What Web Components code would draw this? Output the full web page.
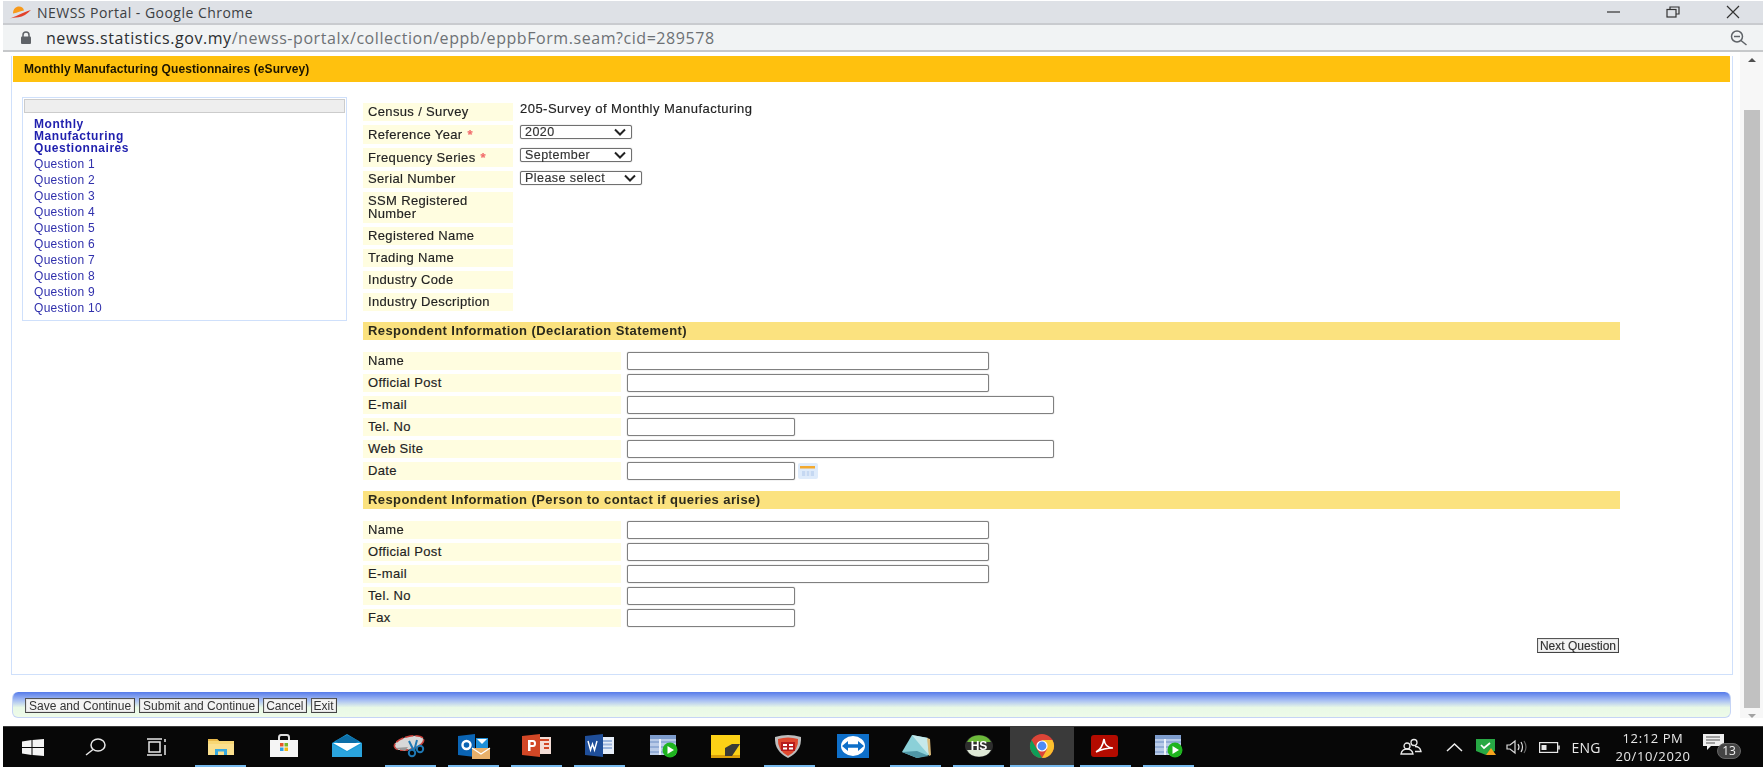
<!DOCTYPE html>
<html>
<head>
<meta charset="utf-8">
<title>NEWSS Portal</title>
<style>
  html, body { margin: 0; height: 100%; background: #fff; overflow: hidden; }
  body { font-family: "Liberation Sans", Arial, sans-serif; }
  .value { margin: -2px 0 0 1px; letter-spacing: .47px; }
</style>
</head>
<body>
<app-shell>
  <chrome-titlebar slot="top">NEWSS Portal - Google Chrome</chrome-titlebar>
  <chrome-address slot="top" host="newss.statistics.gov.my" path="/newss-portalx/collection/eppb/eppbForm.seam?cid=289578"></chrome-address>

  <survey-panel heading="Monthly Manufacturing Questionnaires (eSurvey)">
    <nav-menu slot="nav" title-text="Monthly Manufacturing Questionnaires" count="10"></nav-menu>

    <form-row label="Census / Survey" label-width="150" height="18" flush><span class="value">205-Survey of Monthly Manufacturing</span></form-row>
    <form-row label="Reference Year" required label-width="150" height="19"><pick-list width="112" value="2020"></pick-list></form-row>
    <form-row label="Frequency Series" required label-width="150" height="19"><pick-list width="112" value="September"></pick-list></form-row>
    <form-row label="Serial Number" label-width="150" height="17"><pick-list width="122" value="Please select"></pick-list></form-row>
    <form-row label="SSM Registered Number" label-width="150" height="31" wrap></form-row>
    <form-row label="Registered Name" label-width="150" height="18"></form-row>
    <form-row label="Trading Name" label-width="150" height="18"></form-row>
    <form-row label="Industry Code" label-width="150" height="18"></form-row>
    <form-row label="Industry Description" label-width="150" height="18"></form-row>

    <form-section>Respondent Information (Declaration Statement)</form-section>
    <form-row label="Name" label-width="258" height="18" first><text-field width="362"></text-field></form-row>
    <form-row label="Official Post" label-width="258" height="18"><text-field width="362"></text-field></form-row>
    <form-row label="E-mail" label-width="258" height="18"><text-field width="427"></text-field></form-row>
    <form-row label="Tel. No" label-width="258" height="18"><text-field width="168"></text-field></form-row>
    <form-row label="Web Site" label-width="258" height="18"><text-field width="427"></text-field></form-row>
    <form-row label="Date" label-width="258" height="18"><text-field width="168"></text-field><calendar-button></calendar-button></form-row>

    <form-section>Respondent Information (Person to contact if queries arise)</form-section>
    <form-row label="Name" label-width="258" height="18" first><text-field width="362"></text-field></form-row>
    <form-row label="Official Post" label-width="258" height="18"><text-field width="362"></text-field></form-row>
    <form-row label="E-mail" label-width="258" height="18"><text-field width="362"></text-field></form-row>
    <form-row label="Tel. No" label-width="258" height="18"><text-field width="168"></text-field></form-row>
    <form-row label="Fax" label-width="258" height="18"><text-field width="168"></text-field></form-row>

    <next-row><plain-button tight>Next Question</plain-button></next-row>
  </survey-panel>

  <footer-bar>
    <plain-button>Save and Continue</plain-button>
    <plain-button>Submit and Continue</plain-button>
    <plain-button tight>Cancel</plain-button>
    <plain-button tight>Exit</plain-button>
  </footer-bar>

  <task-bar slot="bottom"></task-bar>
</app-shell>

<script>
class AppShell extends HTMLElement {
  constructor() {
    super();
    this.attachShadow({ mode: "open" });
    this.shadowRoot.innerHTML = `
      <style>
        :host { display: flex; flex-direction: column; width: 1763px; height: 767px; box-sizing: border-box; padding: 1px 0 0 3px; filter: blur(.45px); }
        .mid { flex: 1; display: flex; min-height: 0; }
        .page { flex: 1; padding: 4px 7px 0 8px; min-width: 0; }
        .scroll { width: 23px; background: #f7f7f7; display: flex; flex-direction: column; align-items: center; box-sizing: border-box; padding-top: 6px; }
        .thumb { width: 16px; height: 599px; background: #c1c1c1; margin-top: 48px; }
        .up { width: 0; height: 0; border: 4px solid transparent; border-top: 0; border-bottom: 4px solid #505050; }
        .down { width: 0; height: 0; border: 4px solid transparent; border-bottom: 0; border-top: 4px solid #a3a3a3; margin-top: 6px; }
      </style>
      <slot name="top"></slot>
      <div class="mid">
        <div class="page"><slot></slot></div>
        <div class="scroll"><div class="up"></div><div class="thumb"></div><div class="down"></div></div>
      </div>
      <slot name="bottom"></slot>`;
  }
}
customElements.define("app-shell", AppShell);

class ChromeTitlebar extends HTMLElement {
  constructor() {
    super();
    this.attachShadow({ mode: "open" });
    this.shadowRoot.innerHTML = `
      <style>
        :host { display: flex; align-items: center; height: 22px; background: #dee1e6; border-bottom: 2px solid #c9cbcf; font: 14px "Open Sans", sans-serif; letter-spacing: .47px; color: #3c4043; }
        svg { display: block; }
        .logo { margin: 0 6px 0 6px; }
        .title { flex: 1; }
        .ctl { width: 60px; display: flex; justify-content: center; }
      </style>
      <svg class="logo" width="22" height="13" viewBox="0 0 22 13">
        <path d="M4 7.500C4 3 7 .5 10 .5c2.500 0 4.500 1.500 5 4-3 .6-6 2-11 3z" fill="#f79a1b"/>
        <path d="M0 12.500c6-1 13-6 22-8.500-4 4-8 7-12.500 7.300-3.500.3-6.500.8-9.500 1.200z" fill="#e2412a"/>
      </svg>
      <span class="title"><slot></slot></span>
      <span class="ctl"><svg width="16" height="12" viewBox="0 0 16 12"><path d="M2 6h13" stroke="#333" stroke-width="1.200"/></svg></span>
      <span class="ctl"><svg width="16" height="12" viewBox="0 0 16 12" fill="none" stroke="#333" stroke-width="1.200"><rect x="2" y="3.500" width="9" height="7.500"/><path d="M5 3.500V1h9v7h-3"/></svg></span>
      <span class="ctl"><svg width="16" height="14" viewBox="0 0 16 14"><path d="M2 1l12 12M14 1L2 13" stroke="#333" stroke-width="1.200"/></svg></span>`;
  }
}
customElements.define("chrome-titlebar", ChromeTitlebar);

class ChromeAddress extends HTMLElement {
  constructor() {
    super();
    this.attachShadow({ mode: "open" });
    this.shadowRoot.innerHTML = `
      <style>
        :host { display: flex; align-items: center; height: 25px; background: #f1f3f4; border-bottom: 2px solid #c6c8ca; font: 16px "Open Sans", sans-serif; letter-spacing: .56px; color: #6d7175; }
        svg { display: block; }
        b { font-weight: 400; color: #2b2e31; }
        .lock { margin: 0 14px 0 17px; }
        .url { flex: 1; }
        .zoom { margin-right: 15px; }
      </style>
      <svg class="lock" width="12" height="13" viewBox="0 0 12 13"><path d="M3 6V4a3 3 0 0 1 6 0v2" fill="none" stroke="#5f6368" stroke-width="1.500"/><rect x="1" y="5.500" width="10" height="7.500" rx="1" fill="#5f6368"/></svg>
      <span class="url"><b>${this.getAttribute("host")}</b>${this.getAttribute("path")}</span>
      <svg class="zoom" width="19" height="16" viewBox="0 0 19 16" fill="none" stroke="#5f6368" stroke-width="1.500"><circle cx="8" cy="6.500" r="5.500"/><path d="M5 6.500h6M12 10.500l5.500 4.500"/></svg>`;
  }
}
customElements.define("chrome-address", ChromeAddress);

class SurveyPanel extends HTMLElement {
  constructor() {
    super();
    this.attachShadow({ mode: "open" });
    this.shadowRoot.innerHTML = `
      <style>
        :host { display: block; height: 619px; box-sizing: border-box; border: 1px solid #cfe0fb; border-top-width: 0; padding-right: 2px; }
        .head { height: 26px; margin-left: 1px; background: #ffc10e; color: #1c1500; font-weight: 700; font-size: 12px; letter-spacing: .1px; line-height: 27px; padding-left: 11px; }
        .body { display: flex; padding: 15px 0 0 10px; }
        .form { width: 1257px; margin-left: 16px; padding-top: 6px; font-size: 13px; color: #222; -webkit-text-stroke: .15px currentColor; }
      </style>
      <div class="head">${this.getAttribute("heading")}</div>
      <div class="body">
        <slot name="nav"></slot>
        <div class="form"><slot></slot></div>
      </div>`;
  }
}
customElements.define("survey-panel", SurveyPanel);

class NavMenu extends HTMLElement {
  constructor() {
    super();
    this.attachShadow({ mode: "open" });
    let items = "";
    const n = parseInt(this.getAttribute("count") || 0);
    for (let i = 1; i <= n; i++) items += `<a>Question ${i}</a>`;
    this.shadowRoot.innerHTML = `
      <style>
        :host { display: block; width: 325px; height: 224px; box-sizing: border-box; border: 1px solid #cfe0fb; padding: 1px 1px 0; font-size: 12px; letter-spacing: .3px; color: #3030ac; }
        .top { height: 12px; background: #eee; border: 1px solid #ccc; }
        .list { padding: 5px 0 0 10px; }
        .main { font-weight: 700; width: 110px; line-height: 12px; letter-spacing: .55px; color: #1f1fae; margin-bottom: 3px; }
        a { display: block; line-height: 15.950px; }
      </style>
      <div class="top"></div>
      <div class="list">
        <div class="main">${this.getAttribute("title-text")}</div>
        ${items}
      </div>`;
  }
}
customElements.define("nav-menu", NavMenu);

class FormRow extends HTMLElement {
  constructor() {
    super();
    this.attachShadow({ mode: "open" });
    const w = this.getAttribute("label-width");
    const h = this.getAttribute("height");
    const req = this.hasAttribute("required") ? `<i>*</i>` : "";
    let top = 4;
    if (this.hasAttribute("first")) top = 12;
    if (this.hasAttribute("flush")) top = 0;
    this.shadowRoot.innerHTML = `
      <style>
        :host { display: grid; grid-template-columns: ${w}px 1fr; column-gap: 6px; height: ${h}px; margin-top: ${top}px; letter-spacing: .35px; }
        :host([required]) .label { padding-top: 2px; }
        .label { background: #fffde0; padding-left: 5px; display: flex; align-items: center; line-height: 12.500px; color: #222; }
        .label span { display: block; width: ${this.hasAttribute("wrap") ? "120px" : "auto"}; }
        i { font-style: normal; font-weight: 700; color: #f26a6a; margin-left: 5px; }
        .ctl { display: flex; align-items: flex-start; }
      </style>
      <div class="label"><span>${this.getAttribute("label")}${req}</span></div>
      <div class="ctl"><slot></slot></div>`;
  }
}
customElements.define("form-row", FormRow);

class FormSection extends HTMLElement {
  constructor() {
    super();
    this.attachShadow({ mode: "open" });
    this.shadowRoot.innerHTML = `
      <style>
        :host { display: block; height: 18px; margin-top: 11px; background: #fbe27f; font-weight: 700; font-size: 13px; letter-spacing: .42px; line-height: 18px; padding-left: 5px; color: #2b2a1c; -webkit-text-stroke: 0; }
      </style>
      <slot></slot>`;
  }
}
customElements.define("form-section", FormSection);

class TextField extends HTMLElement {
  constructor() {
    super();
    this.attachShadow({ mode: "open" });
    this.shadowRoot.innerHTML = `
      <style>
        :host { display: block; }
        input { display: block; box-sizing: border-box; width: ${this.getAttribute("width")}px; height: 18px; margin: 0; padding: 0 3px; border: 1px solid #808080; border-radius: 2px; background: #fff; box-shadow: 0 0 1px #777; outline: 0; }
      </style>
      <input type="text">`;
  }
}
customElements.define("text-field", TextField);

class PickList extends HTMLElement {
  constructor() {
    super();
    this.attachShadow({ mode: "open" });
    const v = this.getAttribute("value");
    this.shadowRoot.innerHTML = `
      <style>
        :host { display: block; margin-left: 1px; }
        .box { position: relative; box-sizing: border-box; width: ${this.getAttribute("width")}px; height: 14px; border: 1px solid #707070; border-radius: 2px; background: #fff; box-shadow: 0 0 1px #777; }
        select { position: absolute; inset: 0; width: 100%; height: 100%; opacity: 0; margin: 0; }
        span { display: block; padding-left: 4px; font-size: 12.500px; line-height: 12px; letter-spacing: .45px; color: #333; }
        svg { position: absolute; right: 4px; top: 2px; }
      </style>
      <div class="box">
        <span>${v}</span>
        <svg width="14" height="8" viewBox="0 0 14 8"><path d="M2 1.500l5 5 5-5" fill="none" stroke="#222" stroke-width="2"/></svg>
        <select><option>${v}</option></select>
      </div>`;
  }
}
customElements.define("pick-list", PickList);

class CalendarButton extends HTMLElement {
  constructor() {
    super();
    this.attachShadow({ mode: "open" });
    this.shadowRoot.innerHTML = `
      <style>
        :host { display: block; margin: 1px 0 0 3px; }
        svg { display: block; }
      </style>
      <svg width="20" height="16" viewBox="0 0 20 16">
        <rect width="20" height="16" rx="2" fill="#deebfb"/>
        <rect x="2" y="3" width="15" height="2.500" fill="#f2a930"/>
        <path d="M4 8h12v5H4z" fill="#c5d8f2"/>
        <path d="M8 8v5M12 8v5" stroke="#eef4fc"/>
      </svg>`;
  }
}
customElements.define("calendar-button", CalendarButton);

class PlainButton extends HTMLElement {
  constructor() {
    super();
    this.attachShadow({ mode: "open" });
    const pad = this.hasAttribute("tight") ? 2 : 3;
    this.shadowRoot.innerHTML = `
      <style>
        :host { display: block; }
        button { display: block; box-sizing: border-box; height: 15px; margin: 0; padding: 0 ${pad}px; border: 1px solid #555; border-right-color: #444; border-bottom-color: #444; background: #f3f3f3; box-shadow: inset 0 0 0 1px #e4e4e4; font: 12px "Liberation Sans", Arial, sans-serif; line-height: 12px; color: #333; white-space: nowrap; }
      </style>
      <button><slot></slot></button>`;
  }
}
customElements.define("plain-button", PlainButton);

class NextRow extends HTMLElement {
  constructor() {
    super();
    this.attachShadow({ mode: "open" });
    this.shadowRoot.innerHTML = `
      <style>
        :host { display: flex; justify-content: flex-end; margin-top: 11px; padding-right: 1px; }
      </style>
      <slot></slot>`;
  }
}
customElements.define("next-row", NextRow);

class FooterBar extends HTMLElement {
  constructor() {
    super();
    this.attachShadow({ mode: "open" });
    this.shadowRoot.innerHTML = `
      <style>
        :host { display: flex; align-items: flex-start; gap: 4px; box-sizing: border-box; height: 26px; margin: 17px 2px 0 1px; padding: 6px 0 0 12px; border-radius: 6px; border: 1px solid #c5d4f5; border-top: 0; background: linear-gradient(#567bea 0%, #a9c0f3 34%, #e9f9e6 62%, #eefbe9 100%); }
      </style>
      <slot></slot>`;
  }
}
customElements.define("footer-bar", FooterBar);

const ICONS = {
  explorer: `<path d="M2 5h9l2 2h15v14H2z" fill="#f8d775"/><path d="M2 5h9l2 2H2z" fill="#e8b84a"/><path d="M2 10h26v11H2z" fill="#fbe08e"/><path d="M9 15h12v6H9z" fill="#37a9e1"/><path d="M12 17.500h6V21h-6z" fill="#fbe08e"/>`,
  store: `<path d="M10 6V3.500Q10 1 12 1h6q2 0 2 2.500V6" fill="none" stroke="#ddd" stroke-width="2"/><path d="M1 6h28v17H1z" fill="#f5f5f5"/><path d="M11 9h3.500v3.500H11z" fill="#e8562a"/><path d="M15.500 9H19v3.500h-3.500z" fill="#7ab82a"/><path d="M11 13.500h3.500V17H11z" fill="#2f9fe6"/><path d="M15.500 13.500H19V17h-3.500z" fill="#f5b80f"/>`,
  mail: `<path d="M0 9L15 0l15 9v14H0z" fill="#1b9ad6"/><path d="M3 7L15 1l12 6-12 7z" fill="#0d6fa8"/><path d="M1 9h28L15 17z" fill="#fff"/><path d="M0 10l15 8 15-8v13H0z" fill="#2aa4dd"/>`,
  snip: `<ellipse cx="14" cy="9" rx="15" ry="6.500" transform="rotate(-14 14 9)" fill="#d8d8d8"/><ellipse cx="14" cy="9" rx="15" ry="6.500" transform="rotate(-14 14 9)" fill="none" stroke="#c9403a" stroke-width="1.600" stroke-dasharray="8 2"/><path d="M0 14l10 3 3-4z" fill="#999"/><circle cx="17" cy="19" r="3.200" fill="none" stroke="#1e78b4" stroke-width="2"/><circle cx="25" cy="15" r="3.200" fill="none" stroke="#1e78b4" stroke-width="2"/><path d="M14 7l5 10M22 6l-3 11" stroke="#1e78b4" stroke-width="2"/>`,
  outlook: `<path d="M0 2L17 0v23L0 21z" fill="#0a64b4"/><circle cx="8.500" cy="11" r="4" fill="none" stroke="#fff" stroke-width="2.400"/><path d="M18 4h12v11H18z" fill="#1d8fd8"/><path d="M19 5h10l-5 5z" fill="#fff"/><path d="M14 14h18v11H14z" fill="#e9b06a"/><path d="M14 14l9 6 9-6" fill="none" stroke="#fff" stroke-width="1.200"/>`,
  ppt: `<path d="M14 3h15v17H14z" fill="#f3ddd6"/><path d="M18 6h9M22 10h5M22 14h5" stroke="#d24726" stroke-width="2"/><path d="M0 2L18 0v23L0 21z" fill="#d24726"/><path d="M6 6h5q3 0 3 3.500t-3 3.500H8.500v4H6z" fill="#fff"/><path d="M8.500 8v3H11q1 0 1-1.500T11 8z" fill="#d24726"/>`,
  word: `<path d="M14 3h15v17H14z" fill="#e6edf8"/><path d="M17 7h10M17 10.500h10M17 14h10" stroke="#9db6de" stroke-width="2"/><path d="M0 2L18 0v23L0 21z" fill="#1f4e99"/><path d="M3 7l2.500 9 2-6 2 6 2.500-9" fill="none" stroke="#fff" stroke-width="1.400"/>`,
  sheet: `<path d="M2 1h26v20H2z" fill="#b9cbe8"/><path d="M2 1h26v4H2z" fill="#7d9ccc"/><path d="M2 8h26M2 13h26M2 18h26" stroke="#6d8ec4"/><path d="M12 5v16" stroke="#eef3fb" stroke-width="2"/><circle cx="22" cy="16" r="7.500" fill="#1fb41f"/><path d="M19.500 12v8l6.500-4z" fill="#fff"/>`,
  note: `<path d="M0 1h29v23H0z" fill="#fcd116"/><path d="M0 21h29v3H0z" fill="#d99e0a"/><path d="M14 14l7-4h8l-8 12h-7z" fill="#3a3a36"/>`,
  shield: `<path d="M1 3Q14-1 27 3q1 14-13 21Q0 17 1 3z" fill="#bdbdbd"/><path d="M4 5q10-3 20 0 1 11-10 17Q3 16 4 5z" fill="#e0492f"/><path d="M7 8h14v9H7z" fill="#b71c1c"/><path d="M9 10h4v2H9zM15 10h4v2h-4zM9 13.500h4v2H9zM15 13.500h4v2h-4z" fill="#fff"/>`,
  teamviewer: `<path d="M0 0h32v24H0z" fill="#0e6fc9"/><ellipse cx="16" cy="12" rx="12" ry="10" fill="#fff"/><path d="M5 12l6-5v3.200h10V7l6 5-6 5v-3.200H11V17z" fill="#0e6fc9"/>`,
  journal: `<path d="M1 18L11 1l16 3 1 17-12 3z" fill="#8bd0d8"/><path d="M11 1l16 3 1 17-8-9z" fill="#c6e9ea"/><path d="M26 4l3 1 1 16-2 1z" fill="#d8b878"/><path d="M1 18l15-1 12 5-12 2z" fill="#4e96a6"/>`,
  hs: `<ellipse cx="15" cy="12" rx="14" ry="11" fill="#2e2e2e"/><path d="M3 8a13 11 0 0 1 24 0z" fill="#6cb93a"/><path d="M3 16a13 11 0 0 0 24 0z" fill="#dfe9d6"/><text x="15" y="16" text-anchor="middle" font-family="Liberation Sans" font-weight="700" font-size="12" fill="#fff">HS</text>`,
  chrome: `<g transform="translate(3 0)"><circle cx="12" cy="12" r="12" fill="#db4437"/><path d="M1.600 6l5.200 9 L12 24A12 12 0 0 1 1.600 6z" fill="#0f9d58"/><path d="M12 24l5.200-9L12 6h10.400A12 12 0 0 1 12 24z" fill="#fbc02d"/><circle cx="12" cy="12" r="5.600" fill="#fff"/><circle cx="12" cy="12" r="4.400" fill="#4d8bf5"/></g>`,
  acrobat: `<rect x="1" y="1" width="27" height="22" rx="3" fill="#b30b00"/><path d="M6 18c4-2 7-7 8-13 .5 5 3 9 9 9-5 0-11 1-17 4z" fill="none" stroke="#fff" stroke-width="1.600"/>`
};

class TaskIcon extends HTMLElement {
  constructor() {
    super();
    this.attachShadow({ mode: "open" });
    const name = this.getAttribute("name");
    this.shadowRoot.innerHTML = `
      <style>
        :host { display: flex; position: relative; align-items: center; justify-content: center; height: 41px; width: 63.200px; box-sizing: border-box; padding-bottom: 2px; }
        :host([active]) { background: #3a3a3a; }
        svg { display: block; overflow: visible; }
        .run { position: absolute; left: 6px; right: 6px; bottom: 0; height: 3px; background: #76b9ed; display: none; }
        :host([running]) .run { display: block; }
        :host([active]) .run { left: 0; right: 0; }
      </style>
      <svg width="30" height="24" viewBox="0 0 30 24">${ICONS[name]}</svg>
      <div class="run"></div>`;
  }
}
customElements.define("task-icon", TaskIcon);

class SystemTray extends HTMLElement {
  constructor() {
    super();
    this.attachShadow({ mode: "open" });
    this.shadowRoot.innerHTML = `
      <style>
        :host { display: flex; align-items: center; height: 41px; color: #e8e8e8; font: 13px "Open Sans", sans-serif; }
        svg { display: block; overflow: visible; }
        .c { display: flex; justify-content: center; }
        .clock { width: 92px; text-align: center; line-height: 18px; letter-spacing: .6px; }
        .eng { width: 42px; text-align: center; font-size: 14px; letter-spacing: .2px; }
        .note { position: relative; width: 42px; height: 26px; margin-left: 4px; }
        .note b { position: absolute; left: 14px; top: 9px; width: 24px; height: 16px; border-radius: 8px; background: #444; border: 1px solid #666; box-sizing: border-box; font-weight: 400; font-size: 12px; line-height: 14px; text-align: center; color: #f2f2f2; }
      </style>
      <div class="c" style="width:30px"><svg width="22" height="16" viewBox="0 0 22 16" fill="none" stroke="#e8e8e8" stroke-width="1.300"><circle cx="7" cy="7" r="3"/><path d="M1 15q1-5 6-5t6 5H1z"/><circle cx="14" cy="3.500" r="3"/><path d="M15 7.500q5 0 6 5h-6"/></svg></div>
      <div class="c" style="width:46px;margin-left:5px"><svg width="17" height="10" viewBox="0 0 17 10"><path d="M1 9l7.500-7 7.500 7" fill="none" stroke="#eee" stroke-width="1.500"/></svg></div>
      <div class="c" style="width:18px"><svg width="21" height="16" viewBox="0 0 21 16"><path d="M0 0h19v12l-9 4-10-4z" fill="#27a844"/><path d="M5 6l3 3 6-5" fill="none" stroke="#fff" stroke-width="1.700"/><path d="M15 9l5 7H10z" fill="#f7a51d"/></svg></div>
      <div class="c" style="width:42px"><svg width="21" height="14" viewBox="0 0 21 14" fill="none" stroke="#ddd" stroke-width="1.200"><path d="M1 5h3l5-4v12l-5-4H1z"/><path d="M12 4q2 3 0 6M15 2q3 5 0 10"/><path d="M18 1q4 6 0 12" stroke="#666"/></svg></div>
      <div class="c" style="width:24px"><svg width="21" height="11" viewBox="0 0 21 11" fill="none" stroke="#e8e8e8" stroke-width="1.200"><rect x=".6" y=".6" width="18" height="9.800"/><path d="M20 3.500v4" stroke-width="1.500"/><rect x="2.500" y="3" width="5" height="5" fill="#e8e8e8" stroke="none"/></svg></div>
      <div class="eng" style="margin-left:4px">ENG</div>
      <div class="clock">12:12 PM<br>20/10/2020</div>
      <div class="note">
        <svg width="21" height="17" viewBox="0 0 21 17" style="position:absolute;left:0;top:0"><path d="M0 0h21v12H8l-4 4v-4H0z" fill="#eee"/><path d="M3 3h14M3 6h14M3 9h9" stroke="#555"/></svg>
        <b>13</b>
      </div>`;
  }
}
customElements.define("system-tray", SystemTray);

class TaskBar extends HTMLElement {
  constructor() {
    super();
    this.attachShadow({ mode: "open" });
    const pinned = [
      ["explorer", 1], ["store", 0], ["mail", 0], ["snip", 1], ["outlook", 1], ["ppt", 1], ["word", 1],
      ["sheet", 0], ["note", 0], ["shield", 1], ["teamviewer", 0], ["journal", 1], ["hs", 1],
      ["chrome", 2], ["acrobat", 1], ["sheet", 1]
    ];
    const icons = pinned.map(([n, s]) =>
      `<task-icon name="${n}"${s ? " running" : ""}${s === 2 ? " active" : ""}></task-icon>`).join("");
    this.shadowRoot.innerHTML = `
      <style>
        :host { display: flex; align-items: center; height: 41px; margin-top: 8px; background: #070707; border-top: 1px solid #3c3c3c; box-sizing: border-box; }
        svg { display: block; }
        .sys { width: 62px; display: flex; justify-content: center; }
        .pins { display: flex; margin-left: 1px; }
        system-tray { margin-left: auto; margin-right: 18px; }
      </style>
      <div class="sys" style="margin-left:-1px"><svg width="22" height="17" viewBox="0 0 22 17" fill="#f4f4f4"><path d="M0 2.500L9.500 1v7H0zM10.500 1L22 0v8H10.500zM0 9h9.500v7L0 14.500zM10.500 9H22v8l-11.500-1z"/></svg></div>
      <div class="sys"><svg width="21" height="18" viewBox="0 0 21 18" fill="none" stroke="#e8e8e8" stroke-width="1.500"><ellipse cx="13" cy="7" rx="7" ry="6"/><path d="M8 11.500L1 17"/></svg></div>
      <div class="sys"><svg width="22" height="18" viewBox="0 0 22 18" fill="none" stroke="#e8e8e8" stroke-width="1.500"><rect x="3" y="4" width="11" height="10"/><path d="M1 1h15M1 17h15M19 1v3M19 7v10"/></svg></div>
      <div class="pins">${icons}</div>
      <system-tray></system-tray>`;
  }
}
customElements.define("task-bar", TaskBar);
</script>
</body>
</html>
